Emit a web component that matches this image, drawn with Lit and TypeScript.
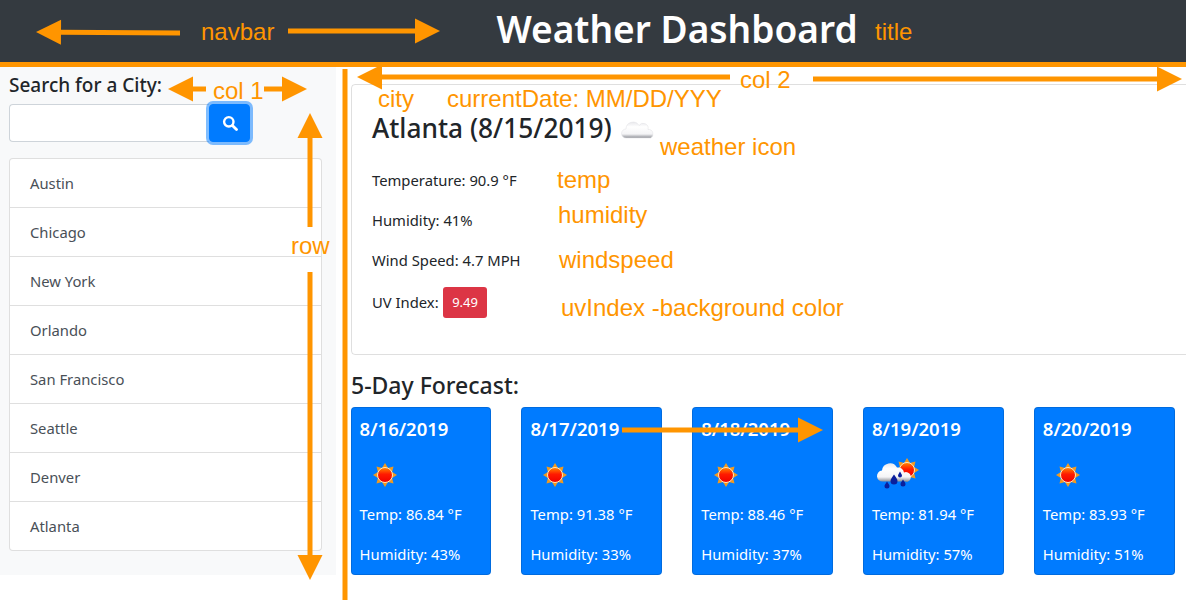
import {LitElement, html, css, svg} from 'lit';
import {customElement} from 'lit/decorators.js';
import {map} from 'lit/directives/map.js';

const cities = ['Austin', 'Chicago', 'New York', 'Orlando', 'San Francisco', 'Seattle', 'Denver', 'Atlanta'];

const forecast = [
  {date: '8/16/2019', temp: '86.84', humidity: '43', rain: false},
  {date: '8/17/2019', temp: '91.38', humidity: '33', rain: false},
  {date: '8/18/2019', temp: '88.46', humidity: '37', rain: false},
  {date: '8/19/2019', temp: '81.94', humidity: '57', rain: true},
  {date: '8/20/2019', temp: '83.93', humidity: '51', rain: false},
];

// orange notes drawn on top of the screenshot: [text, x, baseline]
const notes: [string, number, number][] = [
  ['navbar', 201, 40],
  ['title', 875, 40],
  ['col 1', 213, 99],
  ['col 2', 740, 88],
  ['row', 291, 254],
  ['city', 378, 107],
  ['currentDate: MM/DD/YYY', 447, 107],
  ['weather icon', 660, 155],
  ['temp', 557, 188],
  ['humidity', 558, 223],
  ['windspeed', 559, 268],
  ['uvIndex -background color', 561, 316],
];

// [x1, y1, x2, y2] with the head at x2,y2
const arrows: [number, number, number, number][] = [
  [180, 33, 36, 32],
  [288, 31, 440, 31],
  [206, 89, 168, 89],
  [264, 89, 307, 89],
  [310, 227, 310, 113],
  [310, 272, 310, 580],
  [730, 77, 357, 77],
  [813, 79, 1182, 79],
  [622, 430, 823, 430],
];

const rays = [0, 45, 90, 135, 180, 225, 270, 315];

const sunArt = (cx: number, cy: number) => svg`
  ${rays.map((r) => svg`<polygon points="${cx - 3},${cy - 7} ${cx},${cy - 12} ${cx + 3},${cy - 7}" fill="#f29a1f" transform="rotate(${r} ${cx} ${cy})"></polygon>`)}
  <circle cx=${cx} cy=${cy} r="7.5" fill="url(#sunFill)" stroke="#ffe9c4" stroke-width="1"></circle>
`;

const sunIcon = html`<svg class="icon" viewBox="0 0 50 50">${sunArt(25, 25)}</svg>`;

const rainIcon = html`<svg class="icon" viewBox="0 0 50 50">
  ${sunArt(35, 20)}
  <g transform="translate(0 -1.500)">
    <path d="M11 33A5.500 5.500 0 0 1 10 22A8 8 0 0 1 25 19A6 6 0 0 1 32 24A4.500 4.500 0 0 1 36 33Z" fill="url(#cloudFill)"></path>
    <path d="M22 26c2 3 3.500 4.500 3.500 6.500a3.500 3.500 0 0 1-7 0c0-2 1.500-3.500 3.500-6.500zM28 23c1 2 2 3 2 4a2 2 0 0 1-4 0c0-1 1-2 2-4zM15 33c1 2 2.500 3 2.500 4.500a2.500 2.500 0 0 1-5 0c0-1.500 1.500-2.500 2.500-4.500zM31 31c1 2 2.500 3 2.500 4.500a2.500 2.500 0 0 1-5 0c0-1.500 1.500-2.500 2.500-4.500z" fill="#0a1f9c"></path>
  </g>
</svg>`;

@customElement('app-root')
export class AppRoot extends LitElement {
  static styles = css`
    :host {
      display: block;
      position: relative;
      width: 1186px;
      height: 601px;
      overflow: hidden;
      background: #fff;
      color: #212529;
      font-family: "Noto Sans", "Open Sans", sans-serif;
      font-size: 14.8px;
      line-height: 24px;
    }
    .navbar {
      height: 67px;
      box-sizing: border-box;
      padding: 0 0 9px 168px;
      background: #343a40;
      color: #fff;
      display: flex;
      align-items: center;
      justify-content: center;
    }
    .navbar h1 {
      margin: 0;
      font-size: 37.1px;
      font-weight: 600;
      line-height: 44px;
    }
    .row {
      display: flex;
      align-items: flex-start;
    }
    .sidebar {
      flex: none;
      width: 336px;
      height: 508px;
      box-sizing: border-box;
      padding: 6px 14px 0 9px;
      background: #f8f9fa;
    }
    .sidebar h5 {
      margin: 0 0 7px;
      font-size: 19px;
      font-weight: 500;
      line-height: 24px;
    }
    .search {
      display: flex;
      width: 241px;
      height: 38px;
    }
    .search input {
      flex: 1;
      min-width: 0;
      box-sizing: border-box;
      border: 1px solid #ced4da;
      border-right: 0;
      border-radius: 4px 0 0 4px;
      background: #fff;
    }
    .search button {
      width: 41px;
      border: 1px solid #007bff;
      border-radius: 4px;
      padding: 0;
      background: #007bff;
      box-shadow: 0 0 0 3px rgba(0, 123, 255, 0.5);
      display: flex;
      align-items: center;
      justify-content: center;
    }
    .search svg {
      width: 16px;
      height: 16px;
    }
    .cities {
      margin: 16px 0 0;
      padding: 0;
      list-style: none;
      background: #fff;
      border: 1px solid rgba(0, 0, 0, 0.125);
      border-radius: 4px;
      color: #495057;
    }
    .cities li {
      height: 49px;
      box-sizing: border-box;
      padding: 12px 20px;
      border-bottom: 1px solid rgba(0, 0, 0, 0.125);
    }
    .cities li:last-child {
      border-bottom: 0;
      height: 48px;
    }
    .main {
      flex: none;
      width: 840px;
      padding: 17px 0 0 15px;
    }
    .current {
      box-sizing: border-box;
      height: 271px;
      padding: 10px 20px 20px;
      border: 1px solid rgba(0, 0, 0, 0.125);
      border-radius: 4px;
    }
    .current h3 {
      margin: 0 0 7px;
      height: 66px;
      display: flex;
      align-items: center;
      font-size: 26.3px;
      font-weight: 500;
    }
    .cloud {
      width: 50px;
      height: 50px;
    }
    .current p {
      margin: 0 0 16px;
    }
    .current .uv {
      display: flex;
      align-items: center;
      gap: 4px;
      margin-top: -1px;
    }
    .uv span:first-child {
      margin-top: -2px;
    }
    .badge {
      background: #dc3545;
      color: #fff;
      border-radius: 3px;
      padding: 3px 9.5px;
      font-size: 13px;
      line-height: 25px;
    }
    .forecast-title {
      margin: 16px 0 7px;
      font-size: 23px;
      font-weight: 500;
      line-height: 29px;
    }
    .forecast {
      display: grid;
      grid-template-columns: repeat(5, 140.8px);
      column-gap: 30px;
      width: 825px;
      margin-left: -0.4px;
    }
    .day {
      box-sizing: border-box;
      height: 168px;
      padding: 8px;
      background: #007bff;
      border: 1px solid rgba(0, 0, 0, 0.125);
      border-radius: 4px;
      color: #fff;
    }
    .day h5 {
      margin: 0;
      font-size: 18.5px;
      font-weight: 600;
      line-height: 26px;
    }
    .day p {
      margin: 0 0 16px;
    }
    .day p:last-child {
      margin: 0;
    }
    .icon {
      display: block;
      width: 50px;
      height: 50px;
      margin: 8px 0 2px;
    }
    .defs {
      position: absolute;
      width: 0;
      height: 0;
    }
    .notes {
      position: absolute;
      top: 0;
      left: 0;
      width: 1186px;
      height: 601px;
      pointer-events: none;
    }
    .notes text {
      font-family: "Liberation Sans", Arial, sans-serif;
      font-size: 24px;
      fill: #ff9500;
    }
  `;

  arrow(a: [number, number, number, number]) {
    const [x1, y1, x2, y2] = a;
    const len = Math.hypot(x2 - x1, y2 - y1);
    const ux = (x2 - x1) / len;
    const uy = (y2 - y1) / len;
    const bx = x2 - ux * 25;
    const by = y2 - uy * 25;
    return svg`
      <line x1=${x1} y1=${y1} x2=${bx} y2=${by} stroke="#ff9500" stroke-width="5"></line>
      <polygon points="${x2},${y2} ${bx - uy * 12.5},${by + ux * 12.5} ${bx + uy * 12.5},${by - ux * 12.5}" fill="#ff9500"></polygon>
    `;
  }

  render() {
    return html`
      <svg class="defs" aria-hidden="true">
        <defs>
          <linearGradient id="sunFill" x1="0" y1="0" x2="0" y2="1">
            <stop offset="0" stop-color="#ff8a00"></stop>
            <stop offset="0.45" stop-color="#ff1a00"></stop>
            <stop offset="1" stop-color="#f00000"></stop>
          </linearGradient>
          <linearGradient id="cloudFill" x1="0" y1="0" x2="0" y2="1">
            <stop offset="0" stop-color="#e8e8ec"></stop>
            <stop offset="0.3" stop-color="#ffffff"></stop>
            <stop offset="0.75" stop-color="#f4f4f6"></stop>
            <stop offset="1" stop-color="#8d8f96"></stop>
          </linearGradient>
        </defs>
      </svg>
      <nav class="navbar"><h1>Weather Dashboard</h1></nav>
      <div class="row">
        <aside class="sidebar">
          <h5>Search for a City:</h5>
          <div class="search">
            <input type="text" />
            <button>
              <svg viewBox="0 0 16 16" fill="none" stroke="#fff">
                <circle cx="6.800" cy="6.800" r="4.700" stroke-width="2.400"></circle>
                <line x1="10.400" y1="10.400" x2="14.500" y2="14.500" stroke-width="2.800" stroke-linecap="round"></line>
              </svg>
            </button>
          </div>
          <ul class="cities">
            ${map(cities, (c) => html`<li>${c}</li>`)}
          </ul>
        </aside>
        <main class="main">
          <section class="current">
            <h3>
              <span>Atlanta (8/15/2019)</span>
              <svg class="cloud" viewBox="0 0 50 50">
                <path d="M14 35A4.500 4.500 0 0 1 14 26A7 7 0 0 1 27 22.500A5 5 0 0 1 36 26.500A4.500 4.500 0 0 1 38.500 35Z" fill="url(#cloudFill)" stroke="#e4e4e8" stroke-width="0.6"></path>
              </svg>
            </h3>
            <p>Temperature: 90.9 °F</p>
            <p>Humidity: 41%</p>
            <p>Wind Speed: 4.7 MPH</p>
            <p class="uv"><span>UV Index:</span> <span class="badge">9.49</span></p>
          </section>
          <h4 class="forecast-title">5-Day Forecast:</h4>
          <div class="forecast">
            ${map(forecast, (d) => html`
              <article class="day">
                <h5>${d.date}</h5>
                ${d.rain ? rainIcon : sunIcon}
                <p>Temp: ${d.temp} °F</p>
                <p>Humidity: ${d.humidity}%</p>
              </article>
            `)}
          </div>
        </main>
      </div>
      <svg class="notes" viewBox="0 0 1186 601">
        <rect x="0" y="62" width="1186" height="5" fill="#ff9500"></rect>
        <line x1="345" y1="69" x2="345" y2="600" stroke="#ff9500" stroke-width="5"></line>
        ${map(arrows, (a) => this.arrow(a))}
        ${map(notes, ([t, x, y]) => svg`<text x=${x} y=${y}>${t}</text>`)}
      </svg>
    `;
  }
}
